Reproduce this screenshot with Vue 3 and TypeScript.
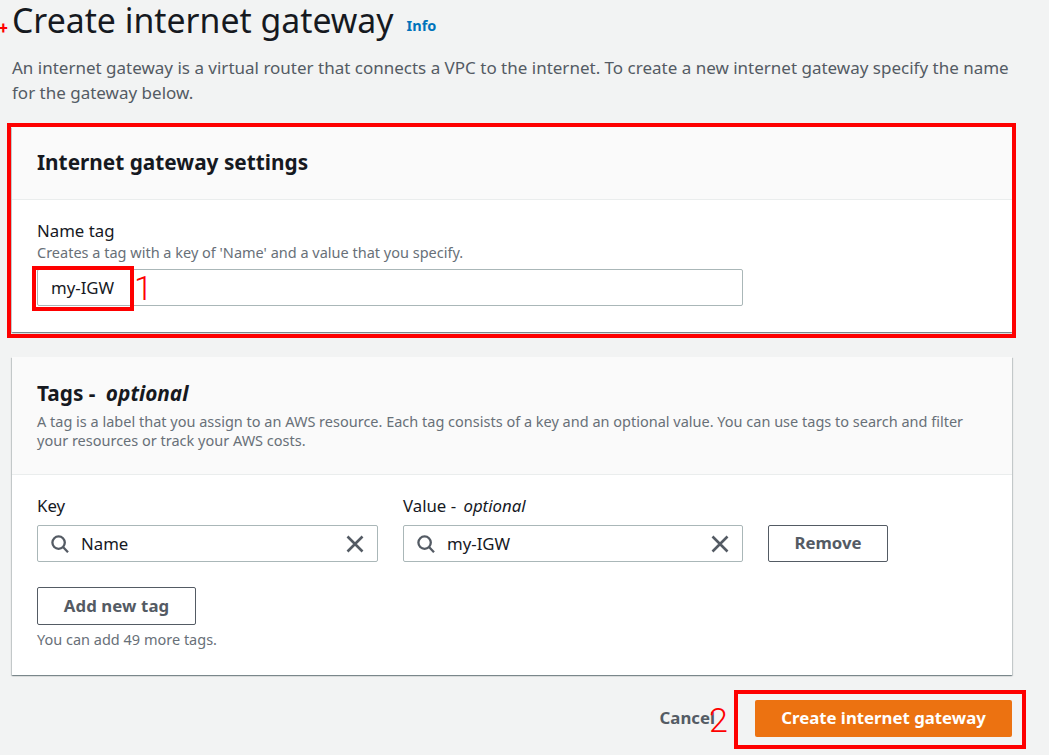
<script setup lang="ts">
interface TagRow {
  label: string
  optional: boolean
  value: string
}

const tagFields: TagRow[] = [
  { label: 'Key', optional: false, value: 'Name' },
  { label: 'Value', optional: true, value: 'my-IGW' },
]
</script>

<template>
  <div class="page">
    <span class="mark plus">+</span>
    <header class="head">
      <h1>Create internet gateway</h1>
      <a class="info">Info</a>
    </header>
    <p class="intro">
      An internet gateway is a virtual router that connects a VPC to the internet. To create a new internet gateway specify the name<br />
      for the gateway below.
    </p>

    <section class="card first">
      <div class="card-head">
        <h2>Internet gateway settings</h2>
      </div>
      <div class="card-body name-body">
        <div class="label">Name tag</div>
        <div class="hint">Creates a tag with a key of 'Name' and a value that you specify.</div>
        <div class="input name-input">my-IGW</div>
      </div>
      <div class="box box-settings"></div>
      <div class="box box-name"></div>
      <span class="mark one">1</span>
    </section>

    <section class="card second">
      <div class="card-head tags-head">
        <h2>Tags - <em>optional</em></h2>
        <p>A tag is a label that you assign to an AWS resource. Each tag consists of a key and an optional value. You can use tags to search and filter<br />your resources or track your AWS costs.</p>
      </div>
      <div class="card-body tags-body">
        <div class="tag-row">
          <div v-for="field in tagFields" :key="field.label" class="field">
            <div class="label">{{ field.label }}<template v-if="field.optional"> - <em>optional</em></template></div>
            <div class="input search">
              <svg class="icon" width="18" height="18" viewBox="0 0 18 18" fill="none" stroke="#545b64" stroke-width="2.3">
                <circle cx="7.6" cy="7.6" r="6.2" />
                <path d="M12 12 17 17.2" />
              </svg>
              <span class="value">{{ field.value }}</span>
              <svg class="icon" width="18" height="18" viewBox="0 0 18 18" fill="none" stroke="#545b64" stroke-width="2.6">
                <path d="M1.5 1.5 16.5 16.5M16.5 1.5 1.5 16.5" />
              </svg>
            </div>
          </div>
          <button class="btn remove">Remove</button>
        </div>
        <button class="btn add">Add new tag</button>
        <div class="hint more">You can add 49 more tags.</div>
      </div>
    </section>

    <footer class="actions">
      <a class="cancel">Cancel</a>
      <button class="primary">Create internet gateway</button>
      <span class="mark two">2</span>
      <div class="box box-create"></div>
    </footer>
  </div>
</template>

<style>
html,
body {
  margin: 0;
  background: #f2f3f3;
}
</style>

<style scoped>
.page {
  position: relative;
  width: 1049px;
  height: 755px;
  overflow: hidden;
  box-sizing: border-box;
  padding: 0 37px 0 12px;
  font-family: "Noto Sans", "Open Sans", sans-serif;
  font-size: 16.8px;
  color: #16191f;
  background: #f2f3f3;
}

.head {
  display: flex;
  align-items: flex-end;
  gap: 13px;
  height: 42px;
}

h1 {
  margin: 0;
  font-size: 33.8px;
  font-weight: 400;
  line-height: 40px;
  padding-bottom: 2px;
  white-space: nowrap;
}

.info {
  font-size: 14.5px;
  font-weight: 700;
  line-height: 20px;
  color: #0073bb;
  padding-bottom: 7px;
}

.intro {
  margin: 13px 0 0;
  font-size: 17px;
  line-height: 25px;
  color: #545b64;
  white-space: nowrap;
}

.card {
  position: relative;
  background: #fff;
  box-shadow: 0 1px 1px 0 rgba(0, 28, 36, 0.3), 1px 1px 1px 0 rgba(0, 28, 36, 0.15), -1px 1px 1px 0 rgba(0, 28, 36, 0.15);
}

.first {
  margin-top: 22px;
  height: 205px;
}

.second {
  margin-top: 25px;
  height: 318px;
}

.card-head {
  padding: 20px 25px 0;
  height: 73px;
  box-sizing: border-box;
  background: #fafafa;
  border-bottom: 1px solid #eaeded;
}

h2 {
  margin: 0;
  font-size: 20.8px;
  font-weight: 700;
  line-height: 30px;
}

h2 em {
  font-weight: 700;
  margin-left: 5px;
}

.label em {
  margin-left: 3px;
}

.tags-head {
  height: 118px;
  padding-top: 21px;
}

.tags-head p {
  margin: 4px 0 0;
  font-size: 14.5px;
  line-height: 19px;
  color: #687078;
  white-space: nowrap;
}

.card-body {
  padding: 0 25px;
}

.name-body {
  padding-top: 20px;
}

.label {
  font-size: 16.8px;
  line-height: 22px;
}

.hint {
  font-size: 14.5px;
  line-height: 21px;
  color: #687078;
}

.input {
  box-sizing: border-box;
  height: 37px;
  background: #fff;
  border: 1px solid #aab7b8;
  border-radius: 2px;
  display: flex;
  align-items: center;
}

.name-input {
  width: 706px;
  margin-top: 6px;
  padding-left: 13px;
}

.tags-body {
  padding-top: 19px;
}

.tag-row {
  display: flex;
  align-items: flex-end;
  gap: 25px;
}

.field {
  width: 341px;
}

.field + .field {
  width: 340px;
}

.field .label {
  line-height: 24px;
  margin-bottom: 7px;
}

.search {
  padding: 0 13px;
}

.search .value {
  flex: 1;
  margin-left: 12px;
}

.icon {
  flex: none;
}

.btn {
  box-sizing: border-box;
  height: 37px;
  background: #fff;
  border: 1px solid #545b64;
  border-radius: 2px;
  font-family: inherit;
  font-size: 16.8px;
  font-weight: 700;
  color: #545b64;
  padding: 0 0 2px;
}

.remove {
  width: 120px;
}

.add {
  display: block;
  width: 159px;
  height: 38px;
  margin-top: 25px;
  letter-spacing: 0.1px;
}

.more {
  margin-top: 4px;
}

.actions {
  position: relative;
  display: flex;
  justify-content: flex-end;
  align-items: center;
  gap: 40px;
  margin-top: 25px;
  height: 37px;
}

.cancel {
  font-weight: 700;
  color: #545b64;
  padding-bottom: 2px;
}

.primary {
  box-sizing: border-box;
  width: 257px;
  height: 37px;
  border: 0;
  border-radius: 2px;
  background: #ec7211;
  color: #fff;
  font-family: inherit;
  font-size: 16.8px;
  font-weight: 700;
  padding: 0 0 2px;
}

.box {
  position: absolute;
  box-sizing: border-box;
  border: 4px solid #fe0000;
}

.box-settings {
  left: -5px;
  top: -4px;
  width: 1009px;
  height: 215px;
}

.box-name {
  left: 20px;
  top: 139px;
  width: 102px;
  height: 45px;
}

.box-create {
  right: -14px;
  top: -10px;
  width: 292px;
  height: 59px;
}

.mark {
  position: absolute;
  color: #fe0000;
  font-family: Roboto, sans-serif;
  font-weight: 300;
  line-height: 1;
}

.plus {
  left: -1px;
  top: 21px;
  font-size: 16px;
  font-weight: 700;
}

.one {
  left: 122px;
  top: 144px;
  font-size: 34px;
}

.two {
  left: 697px;
  top: 3px;
  font-size: 34px;
}
</style>
